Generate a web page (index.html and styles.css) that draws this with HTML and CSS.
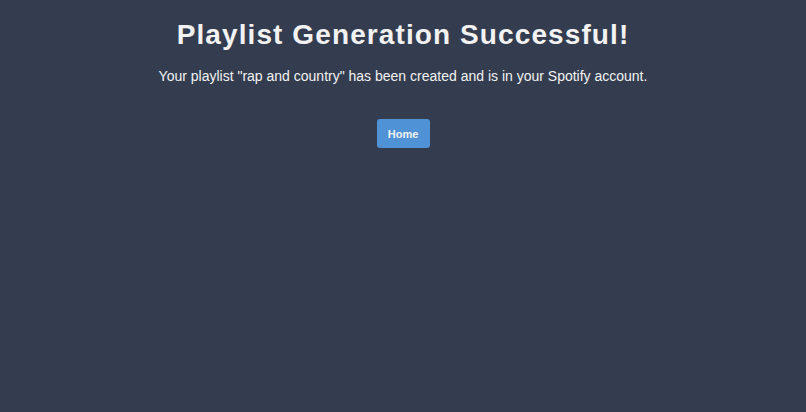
FILE: index.html
```html
<!DOCTYPE html>
<html>
<head>
<meta charset="utf-8">
<link rel="stylesheet" href="styles.css">
</head>
<body>
<main class="page">
  <h1 class="title">Playlist Generation Successful!</h1>
  <p class="message">Your playlist "rap and country" has been created and is in your Spotify account.</p>
  <a class="home-btn" href="#">Home</a>
</main>
</body>
</html>
```
FILE: styles.css
```css
html, body {
  margin: 0;
  padding: 0;
  height: 100%;
}
body {
  background: #333d4f;
  color: #f2f2f2;
  font-family: "Liberation Sans", Arial, sans-serif;
}
.page {
  display: flex;
  flex-direction: column;
  align-items: center;
  padding-top: 17px;
}
.title {
  margin: 0;
  font-size: 28px;
  font-weight: bold;
  letter-spacing: 1.1px;
  line-height: 36px;
}
.message {
  margin: 13px 0 0;
  font-size: 14px;
  line-height: 20px;
}
.home-btn {
  margin-top: 33px;
  display: flex;
  align-items: center;
  justify-content: center;
  width: 53px;
  height: 29px;
  background: #4f92d6;
  color: #f2f2f2;
  border-radius: 3px;
  font-size: 11px;
  font-weight: bold;
  text-decoration: none;
}
```
